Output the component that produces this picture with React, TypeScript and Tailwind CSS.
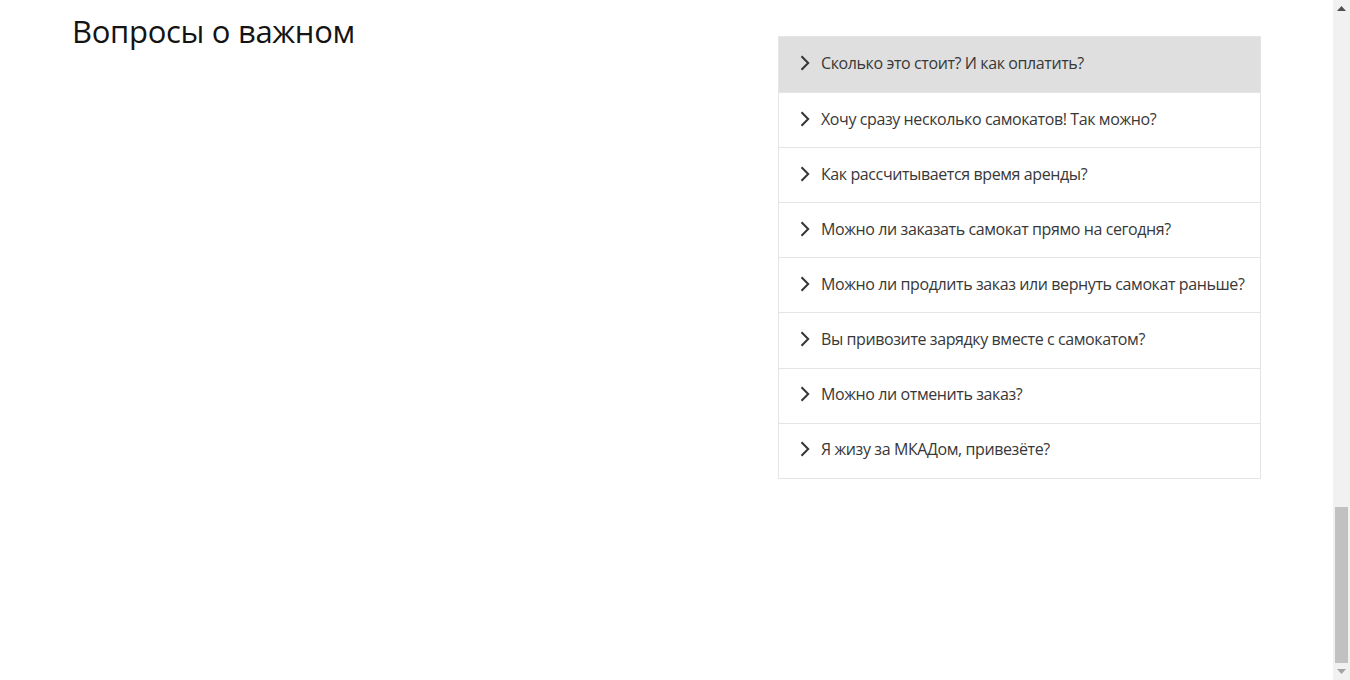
const questions = [
  'Сколько это стоит? И как оплатить?',
  'Хочу сразу несколько самокатов! Так можно?',
  'Как рассчитывается время аренды?',
  'Можно ли заказать самокат прямо на сегодня?',
  'Можно ли продлить заказ или вернуть самокат раньше?',
  'Вы привозите зарядку вместе с самокатом?',
  'Можно ли отменить заказ?',
  'Я жизу за МКАДом, привезёте?',
];

function Chevron() {
  return (
    <svg width="12" height="16" viewBox="0 0 12 16" fill="none" className="shrink-0">
      <path d="M2.5 1.2 L9.2 8 L2.5 14.8" stroke="#363636" strokeWidth="2" />
    </svg>
  );
}

function Scrollbar() {
  return (
    <div className="w-[17px] h-[680px] bg-[#f1f1f1] flex flex-col items-center shrink-0">
      <div className="h-[17px] flex items-center justify-center">
        <svg width="9" height="5" viewBox="0 0 9 5">
          <path d="M0 5 L4.5 0 L9 5 Z" fill="#505050" />
        </svg>
      </div>
      <div className="flex-1 w-full flex flex-col justify-end px-[2px]">
        <div className="h-[156px] w-full bg-[#c1c1c1]" />
      </div>
      <div className="h-[17px] flex items-center justify-center">
        <svg width="9" height="5" viewBox="0 0 9 5">
          <path d="M0 0 L9 0 L4.5 5 Z" fill="#a3a3a3" />
        </svg>
      </div>
    </div>
  );
}

export default function App() {
  return (
    <div className="flex w-[1350px] h-[680px] overflow-hidden bg-white">
      <div className="flex-1 flex justify-center">
        <div className="w-[1189px] flex justify-between items-start">
          <h2 className="font-['Open_Sans',sans-serif] text-[31px] leading-[40px] text-[#141414] mt-[11px] tracking-[-0.3px]">
            Вопросы о важном
          </h2>
          <div className="w-[483px] mt-[36px] border border-[#e5e5e5]">
            {questions.map((q, i) => (
              <div
                key={q}
                className={`flex items-center gap-[10px] pl-[20px] pb-[3px] h-[55.1px] ${
                  i === 0 ? 'bg-[#dfdfdf]' : 'bg-white border-t border-[#e5e5e5]'
                }`}
              >
                <Chevron />
                <span className="font-['Open_Sans',sans-serif] text-[16px] tracking-[-0.4px] whitespace-nowrap text-[#383838]">
                  {q}
                </span>
              </div>
            ))}
          </div>
        </div>
      </div>
      <Scrollbar />
    </div>
  );
}
